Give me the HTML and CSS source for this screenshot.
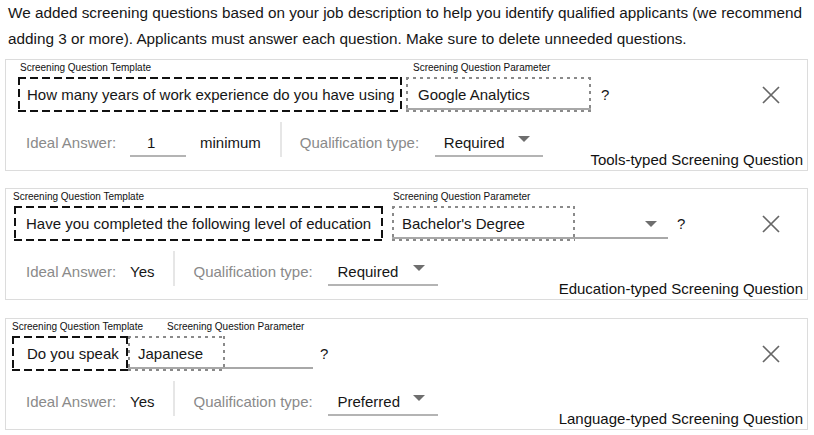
FILE: index.html
```html
<!DOCTYPE html>
<html lang="en">
<head>
<meta charset="utf-8">
<title>Screening questions</title>
<link rel="stylesheet" href="styles.css">
</head>
<body>
<p class="intro">We added screening questions based on your job description to help you identify qualified applicants (we recommend adding 3 or more). Applicants must answer each question. Make sure to delete unneeded questions.</p>

<section class="card c1">
  <div class="caps">
    <span class="cap cap-tpl">Screening Question Template</span>
    <span class="cap">Screening Question Parameter</span>
  </div>
  <div class="qrow">
    <div class="tpl dash-black">How many years of work experience do you have using</div>
    <div class="pinput">
      <div class="param dot-gray">Google Analytics</div>
    </div>
    <span class="qmark">?</span>
    <svg class="close" viewBox="0 0 18 18" width="18" height="18"><path d="M1 1L17 17M17 1L1 17"/></svg>
  </div>
  <div class="arow">
    <span class="muted ideal">Ideal Answer:</span>
    <span class="num">1</span>
    <span class="txt unit">minimum</span>
    <span class="divider"></span>
    <span class="muted qlabel">Qualification type:</span>
    <span class="select"><span class="txt">Required</span><i class="tri"></i></span>
  </div>
  <span class="kind">Tools-typed Screening Question</span>
</section>

<section class="card c2">
  <div class="caps">
    <span class="cap cap-tpl">Screening Question Template</span>
    <span class="cap">Screening Question Parameter</span>
  </div>
  <div class="qrow">
    <div class="tpl dash-black">Have you completed the following level of education</div>
    <div class="pinput">
      <div class="param dot-gray">Bachelor's Degree</div>
      <i class="tri ptri"></i>
    </div>
    <span class="qmark">?</span>
    <svg class="close" viewBox="0 0 18 18" width="18" height="18"><path d="M1 1L17 17M17 1L1 17"/></svg>
  </div>
  <div class="arow">
    <span class="muted ideal">Ideal Answer:</span>
    <span class="txt">Yes</span>
    <span class="divider"></span>
    <span class="muted qlabel">Qualification type:</span>
    <span class="select"><span class="txt">Required</span><i class="tri"></i></span>
  </div>
  <span class="kind">Education-typed Screening Question</span>
</section>

<section class="card c3">
  <div class="caps">
    <span class="cap cap-tpl">Screening Question Template</span>
    <span class="cap">Screening Question Parameter</span>
  </div>
  <div class="qrow">
    <div class="tpl dash-black">Do you speak</div>
    <div class="pinput">
      <div class="param dot-gray">Japanese</div>
    </div>
    <span class="qmark">?</span>
    <svg class="close" viewBox="0 0 18 18" width="18" height="18"><path d="M1 1L17 17M17 1L1 17"/></svg>
  </div>
  <div class="arow">
    <span class="muted ideal">Ideal Answer:</span>
    <span class="txt">Yes</span>
    <span class="divider"></span>
    <span class="muted qlabel">Qualification type:</span>
    <span class="select"><span class="txt">Preferred</span><i class="tri"></i></span>
  </div>
  <span class="kind">Language-typed Screening Question</span>
</section>
</body>
</html>
```

FILE: styles.css
```css
* { box-sizing: border-box; }

body {
  margin: 0;
  background: #fff;
  color: #161616;
  font-family: "Liberation Sans", Arial, sans-serif;
  font-size: 15px;
}

.intro {
  margin: 0;
  padding: 0 2px 0 8px;
  font-size: 15.3px;
  line-height: 26px;
}

.card {
  position: relative;
  width: 803px;
  height: 112px;
  margin: 7px 0 0 5px;
  padding-top: 2px;
  border: 1px solid #dcdcdc;
}
.card.c2 { margin-top: 17px; }
.card.c3 { margin-top: 18px; }

/* captions */
.caps {
  display: flex;
  height: 12px;
  line-height: 12px;
  font-size: 10px;
  color: #111;
  white-space: nowrap;
}
.c1 .caps { padding-left: 14px; }
.c1 .cap-tpl { width: 393px; }
.c2 .caps { padding-left: 7px; }
.c2 .cap-tpl { width: 380px; }
.c3 .caps { padding-left: 6px; }
.c3 .cap-tpl { width: 155px; }

/* question row */
.qrow {
  display: flex;
  align-items: center;
  height: 35px;
  margin-top: 3px;
  white-space: nowrap;
}

.tpl {
  height: 35px;
  line-height: 35px;
  flex: none;
}
.dash-black {
  background:
    repeating-linear-gradient(90deg, #111 0 8px, transparent 8px 12px) left top / 100% 2px no-repeat,
    repeating-linear-gradient(90deg, #111 0 8px, transparent 8px 12px) left bottom / 100% 2px no-repeat,
    repeating-linear-gradient(180deg, #111 0 8px, transparent 8px 12px) left top / 2px 100% no-repeat,
    repeating-linear-gradient(180deg, #111 0 8px, transparent 8px 12px) right top / 2px 100% no-repeat;
}
.c1 .tpl { margin-left: 12px; width: 384px; padding-left: 9px; }
.c2 .tpl { margin-left: 8px; width: 369px; padding-left: 12px; }
.c3 .tpl { margin-left: 6px; width: 116px; padding-left: 15px; }

.pinput {
  display: flex;
  align-items: center;
  height: 35px;
  flex: none;
  background: linear-gradient(#a8a8a8, #a8a8a8) left 0 bottom 2px / 100% 2px no-repeat;
}
.c1 .pinput { margin-left: 4px; width: 185px; }
.c2 .pinput { margin-left: 9px; width: 276px; }
.c3 .pinput { margin-left: 0; width: 185px; }

.param {
  height: 35px;
  line-height: 35px;
  background-color: #fff;
}
.dot-gray {
  background:
    repeating-linear-gradient(90deg, #8a8a8a 0 3px, transparent 3px 7px) left top / 100% 2px no-repeat,
    repeating-linear-gradient(90deg, #8a8a8a 0 3px, transparent 3px 7px) left bottom / 100% 2px no-repeat,
    repeating-linear-gradient(180deg, #8a8a8a 0 3px, transparent 3px 7px) left top / 2px 100% no-repeat,
    repeating-linear-gradient(180deg, #8a8a8a 0 3px, transparent 3px 7px) right top / 2px 100% no-repeat;
}
.c1 .param { width: 185px; padding-left: 12px; }
.c2 .param { width: 183px; padding-left: 10px; }
.c3 .param { width: 97px; padding-left: 10px; }

.ptri { margin-left: auto; margin-right: 11px; }

.qmark { line-height: 20px; }
.c1 .qmark { margin-left: 10px; }
.c2 .qmark { margin-left: 9px; }
.c3 .qmark { margin-left: 7px; }

.close {
  margin-left: auto;
  margin-right: 27px;
  flex: none;
}
.close path {
  stroke: #666;
  stroke-width: 1.7;
  fill: none;
}

/* answer row */
.arow {
  display: flex;
  align-items: stretch;
  height: 35px;
  margin-top: 10px;
  padding-left: 20px;
  white-space: nowrap;
}
.arow .muted,
.arow .txt,
.arow .num {
  padding-top: 11px;
  line-height: 20px;
}
.muted { color: #8a8a8a; }
.ideal { width: 104px; flex: none; }
.num {
  width: 56px;
  padding-left: 17px;
  border-bottom: 2px solid #b4b4b4;
}
.unit { margin-left: 14px; }
.divider {
  width: 2px;
  background: #e6e6e6;
  margin: 0 18px 0 19px;
}
.qlabel { width: 135px; flex: none; }

.select {
  display: flex;
  width: 110px;
  padding: 0 13px 0 9px;
  border-bottom: 2px solid #b4b4b4;
}
.select .tri {
  margin-left: auto;
  margin-top: 14px;
}
.c1 .select { width: 108px; }

.tri {
  display: block;
  flex: none;
  width: 0;
  height: 0;
  border-left: 6px solid transparent;
  border-right: 6px solid transparent;
  border-top: 6px solid #6e6e6e;
}

.kind {
  position: absolute;
  right: 4px;
  bottom: 1px;
  font-size: 15px;
  line-height: 18px;
  color: #111;
  white-space: nowrap;
}
```
